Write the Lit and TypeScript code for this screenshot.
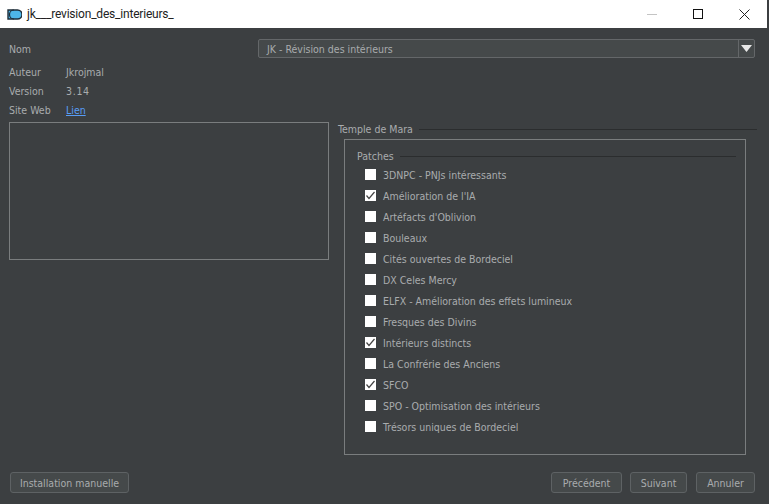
import { LitElement, html, css, svg } from "lit";
import { customElement } from "lit/decorators.js";

const PATCHES: [string, boolean][] = [
  ["3DNPC - PNJs intéressants", false],
  ["Amélioration de l'IA", true],
  ["Artéfacts d'Oblivion", false],
  ["Bouleaux", false],
  ["Cités ouvertes de Bordeciel", false],
  ["DX Celes Mercy", false],
  ["ELFX - Amélioration des effets lumineux", false],
  ["Fresques des Divins", false],
  ["Intérieurs distincts", true],
  ["La Confrérie des Anciens", false],
  ["SFCO", true],
  ["SPO - Optimisation des intérieurs", false],
  ["Trésors uniques de Bordeciel", false],
];

@customElement("app-root")
export class AppRoot extends LitElement {
  static styles = css`
    :host {
      display: block;
      width: 769px;
      height: 504px;
      overflow: hidden;
      background: #3c3f41;
      font-family: "DejaVu Sans", sans-serif;
      font-stretch: condensed;
      font-size: 10.5px;
      color: #a9acae;
    }
    .title {
      height: 28px;
      background: #fff;
      display: flex;
      align-items: center;
      padding-left: 7px;
      gap: 5px;
      color: #222;
      font-family: "Roboto", sans-serif;
      font-stretch: normal;
      font-size: 12px;
      margin-right: 2px;
    }
    .title .name { flex: 1; letter-spacing: -0.2px; }
    .win { display: flex; }
    .win div { width: 46px; height: 28px; display: flex; align-items: center; justify-content: center; }
    .body {
      height: 476px;
      box-sizing: border-box;
      padding: 11px 14px 11px 9px;
      display: flex;
      flex-direction: column;
    }
    .nom { display: flex; align-items: center; height: 19px; }
    .nom .lab { width: 249px; }
    .combo {
      flex: 1;
      height: 19px;
      box-sizing: border-box;
      border: 1px solid #646769;
      border-radius: 2px;
      background: #45494a;
      display: flex;
      align-items: center;
      padding-left: 8px;
    }
    .combo span { flex: 1; }
    .arrow {
      width: 15px;
      height: 100%;
      border-left: 1px solid #646769;
      display: flex;
      align-items: center;
      justify-content: center;
    }
    .meta { margin-top: 4px; display: grid; grid-template-columns: 57px 1fr; grid-auto-rows: 19px; align-items: center; }
    .meta a { color: #589df6; text-decoration: underline; }
    .num { letter-spacing: 0.7px; }
    .main { display: flex; margin-top: 3px; flex: 1; }
    .preview {
      width: 320px;
      height: 138px;
      box-sizing: border-box;
      border: 1px solid #7a7d7e;
    }
    .right { flex: 1; margin-left: 9px; display: flex; flex-direction: column; }
    .head { display: flex; align-items: center; gap: 6px; height: 14px; }
    .head i { flex: 1; height: 1px; background: #2b2d2e; }
    .head.top i { margin-right: -2px; }
    .outer {
      margin-left: 6px;
      margin-right: 9px;
      margin-top: 3px;
      height: 316px;
      box-sizing: border-box;
      border: 1px solid #7a7d7e;
      padding: 9px 9px 0 12px;
    }
    .list { display: flex; flex-direction: column; margin-top: 1px; padding-left: 8px; }
    .row { display: flex; align-items: center; gap: 7px; height: 21px; }
    .box { width: 11px; height: 11px; background: #fff; display: block; flex: none; }
    .foot { display: flex; gap: 8px; height: 21px; margin-left: 1px; }
    .foot .sp { flex: 1; }
    button {
      all: unset;
      box-sizing: border-box;
      height: 21px;
      display: flex;
      align-items: center;
      justify-content: center;
      border: 1px solid #5e6264;
      border-radius: 3px;
      background: #45494a;
      color: #a9acae;
      font: inherit;
    }
    .b1 { width: 119px; }
    .b2 { width: 71px; }
    .b3 { width: 57px; }
    .b4 { width: 59px; margin-left: 1px; }
  `;

  private check() {
    return svg`<svg class="box" viewBox="0 0 11 11"><rect width="11" height="11" fill="#fff"/><path d="M1.5 5.5L4 8.5L9.5 2" fill="none" stroke="#444" stroke-width="1.2"/></svg>`;
  }

  render() {
    return html`
      <div class="title">
        <svg width="15" height="11" viewBox="0 0 15 11">
          <path d="M1 1H10.5A4.5 4.5 0 0 1 10.5 10H1Z" fill="#4db5e8" stroke="#1d2c38" stroke-width="1.4"/>
          <path d="M7 1A4.5 4.5 0 0 0 7 10" fill="none" stroke="#1d2c38" stroke-width="1.2"/>
        </svg>
        <span class="name">jk___revision_des_interieurs_</span>
        <div class="win">
          <div><svg width="12" height="12"><path d="M1 6.5H11" stroke="#c4c4c4"/></svg></div>
          <div><svg width="11" height="11"><rect x=".5" y=".5" width="9" height="9" fill="none" stroke="#111"/></svg></div>
          <div><svg width="11" height="11"><path d="M.5 .5L10.5 10.5M10.5 .5L.5 10.5" stroke="#222"/></svg></div>
        </div>
      </div>
      <div class="body">
        <div class="nom">
          <span class="lab">Nom</span>
          <div class="combo">
            <span>JK - Révision des intérieurs</span>
            <div class="arrow"><svg width="11" height="7"><path d="M0 0H11L5.5 7Z" fill="#e8e8e8"/></svg></div>
          </div>
        </div>
        <div class="meta">
          <span>Auteur</span><span>Jkrojmal</span>
          <span>Version</span><span class="num">3.14</span>
          <span>Site Web</span><a>Lien</a>
        </div>
        <div class="main">
          <div class="preview"></div>
          <div class="right">
            <div class="head top"><span>Temple de Mara</span><i></i></div>
            <div class="outer">
              <div class="head"><span>Patches</span><i></i></div>
              <div class="list">
                ${PATCHES.map(([t, c]) => html`<div class="row">${c ? this.check() : html`<span class="box"></span>`}<span>${t}</span></div>`)}
              </div>
            </div>
          </div>
        </div>
        <div class="foot">
          <button class="b1">Installation manuelle</button>
          <span class="sp"></span>
          <button class="b2">Précédent</button>
          <button class="b3">Suivant</button>
          <button class="b4">Annuler</button>
        </div>
      </div>
    `;
  }
}
